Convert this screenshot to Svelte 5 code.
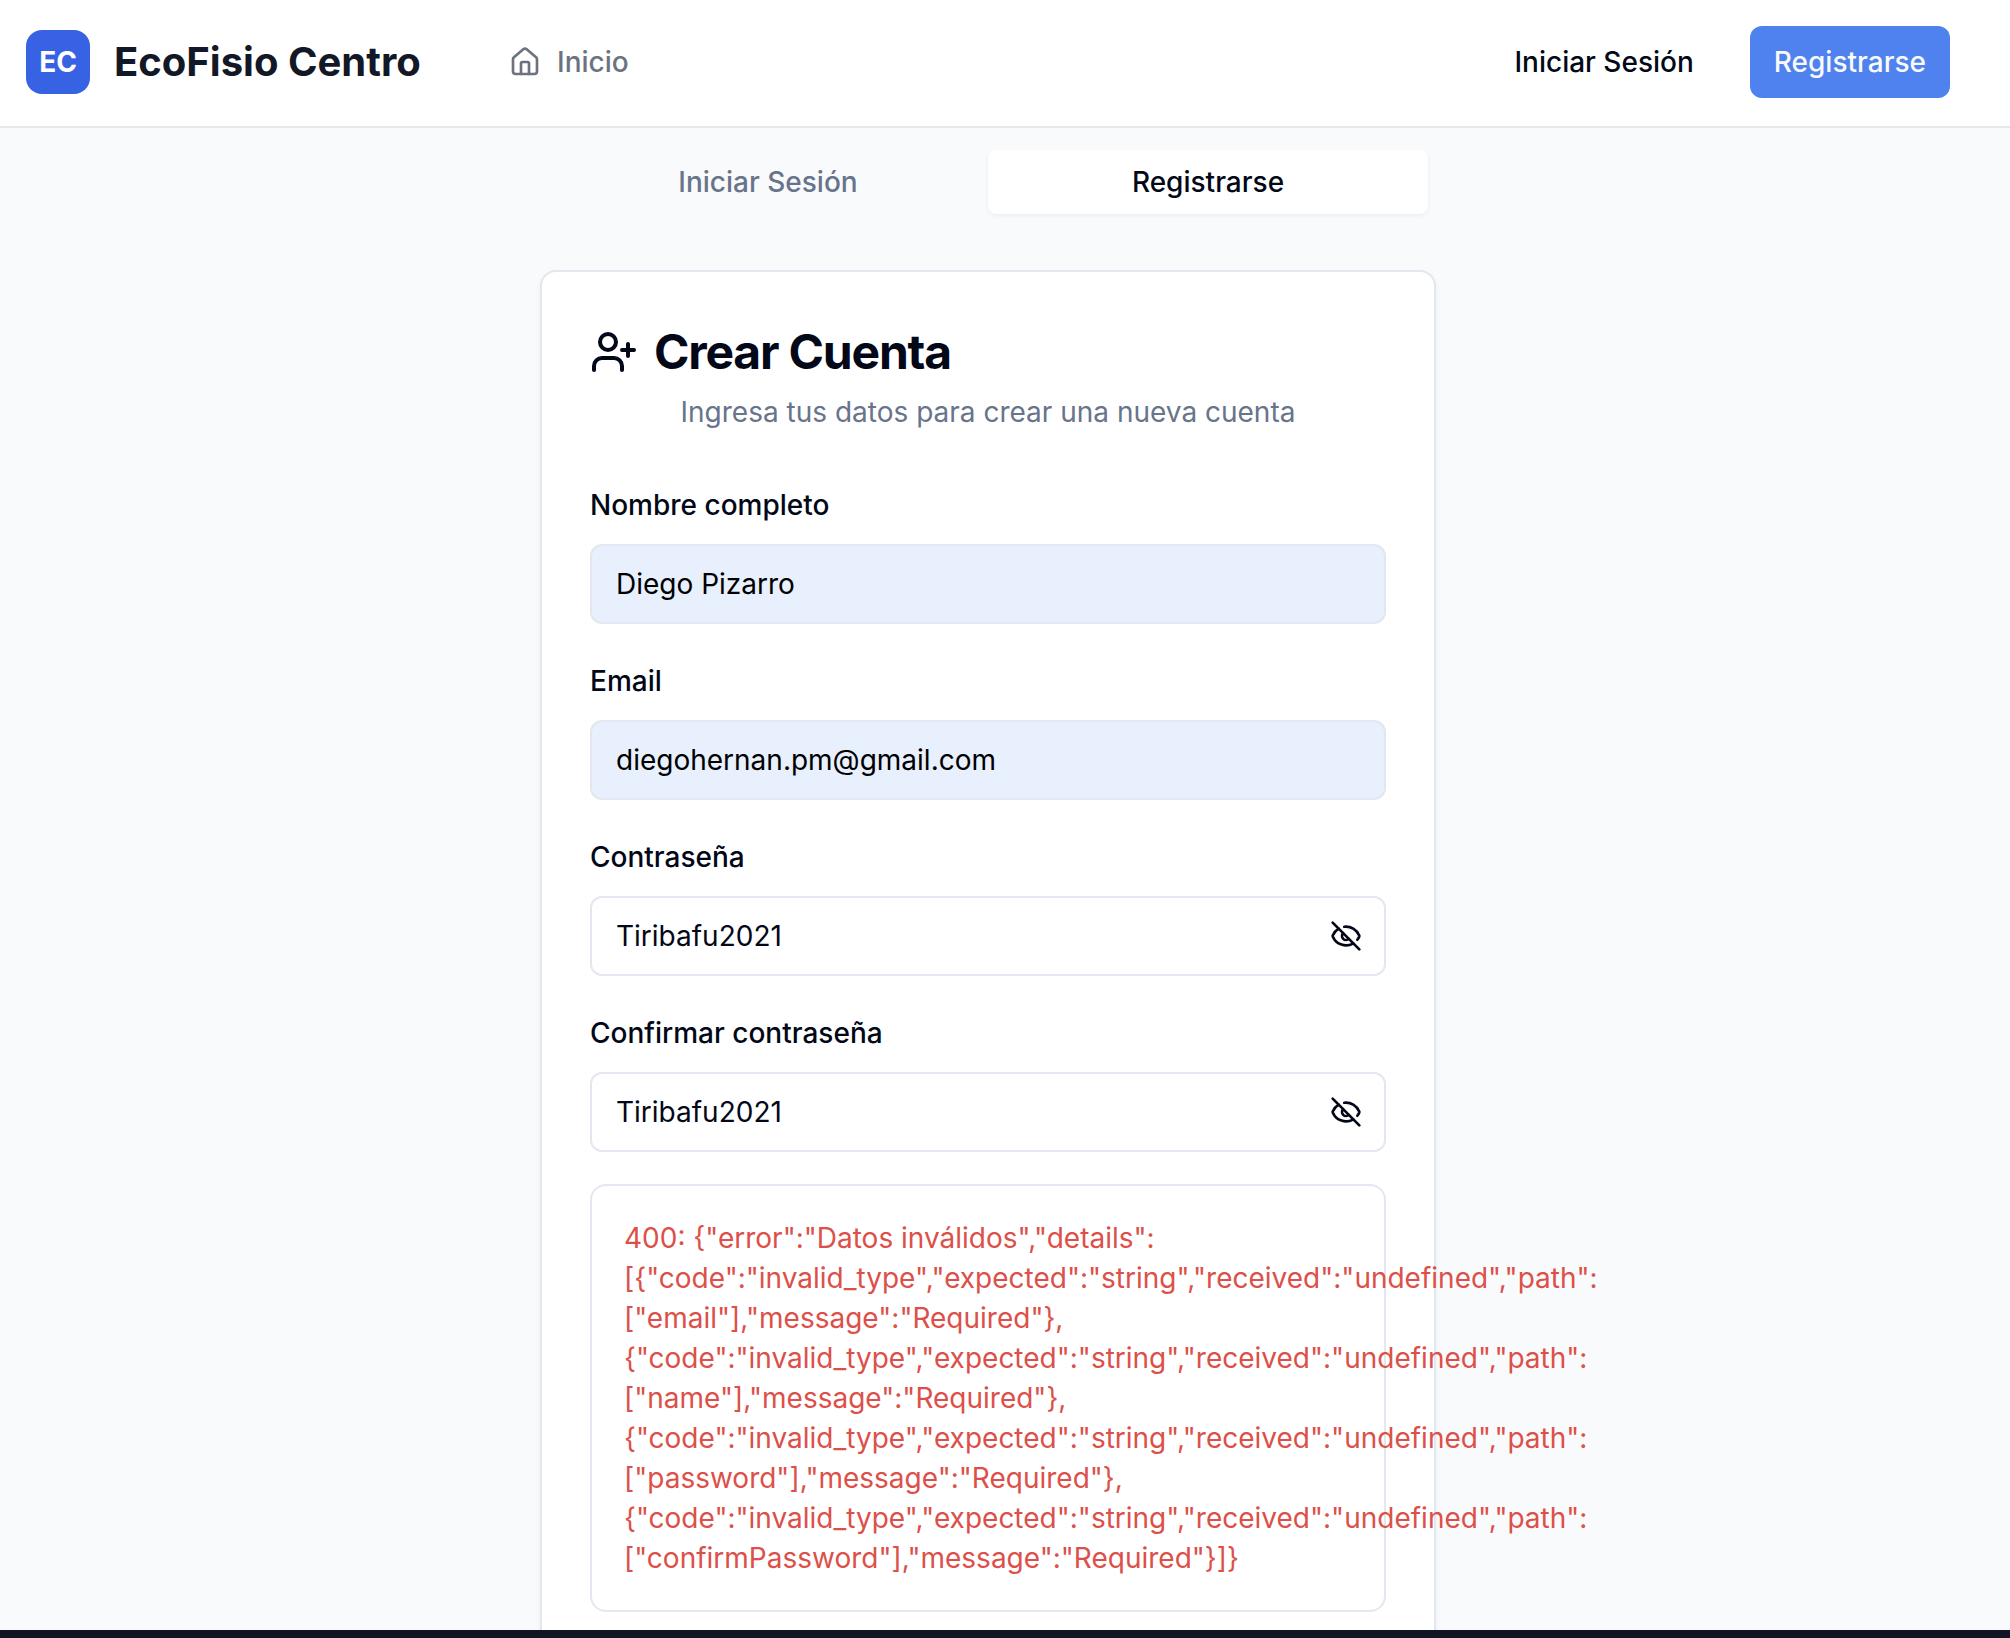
<script>
  let tab = $state('register');

  const fields = $state([
    { id: 'name', label: 'Nombre completo', value: 'Diego Pizarro', autofilled: true, secret: false },
    { id: 'email', label: 'Email', value: 'diegohernan.pm@gmail.com', autofilled: true, secret: false },
    { id: 'password', label: 'Contraseña', value: 'Tiribafu2021', autofilled: false, secret: true },
    { id: 'confirm', label: 'Confirmar contraseña', value: 'Tiribafu2021', autofilled: false, secret: true }
  ]);

  const issue = '{"code":"invalid_type","expected":"string","received":"undefined","path":';
  const errorLines = [
    '400: {"error":"Datos inválidos","details":',
    '[' + issue,
    '["email"],"message":"Required"},',
    issue,
    '["name"],"message":"Required"},',
    issue,
    '["password"],"message":"Required"},',
    issue,
    '["confirmPassword"],"message":"Required"}]}'
  ];
</script>

<div class="page">
  <header class="topbar">
    <div class="logo">EC</div>
    <div class="brand">EcoFisio Centro</div>
    <nav class="nav">
      <svg class="icon" viewBox="0 0 24 24">
        <path d="M15 21v-8a1 1 0 0 0-1-1h-4a1 1 0 0 0-1 1v8" />
        <path d="M3 10a2 2 0 0 1 .709-1.528l7-5.999a2 2 0 0 1 2.582 0l7 5.999A2 2 0 0 1 21 10v9a2 2 0 0 1-2 2H5a2 2 0 0 1-2-2z" />
      </svg>
      <span>Inicio</span>
    </nav>
    <div class="actions">
      <button class="ghost">Iniciar Sesión</button>
      <button class="primary">Registrarse</button>
    </div>
  </header>

  <main class="content">
    <div class="tabs">
      <button class="tab" class:active={tab === 'login'} onclick={() => (tab = 'login')}>Iniciar Sesión</button>
      <button class="tab" class:active={tab === 'register'} onclick={() => (tab = 'register')}>Registrarse</button>
    </div>

    <section class="card">
      <h1 class="title">
        <svg class="icon large" viewBox="0 0 24 24">
          <path d="M16 21v-2a4 4 0 0 0-4-4H6a4 4 0 0 0-4 4v2" />
          <circle cx="9" cy="7" r="4" />
          <path d="M19 8v6M22 11h-6" />
        </svg>
        <span>Crear Cuenta</span>
      </h1>
      <p class="subtitle">Ingresa tus datos para crear una nueva cuenta</p>

      <form class="form">
        {#each fields as field (field.id)}
          <div class="field">
            <label for={field.id}>{field.label}</label>
            <div class="control" class:autofilled={field.autofilled}>
              <input id={field.id} type="text" autocomplete="off" spellcheck="false" bind:value={field.value} />
              {#if field.secret}
                <svg class="icon" viewBox="0 0 24 24">
                  <path d="M10.733 5.076a10.744 10.744 0 0 1 11.205 6.575 1 1 0 0 1 0 .696 10.747 10.747 0 0 1-1.444 2.49" />
                  <path d="M14.084 14.158a3 3 0 0 1-4.242-4.242" />
                  <path d="M17.479 17.499a10.75 10.75 0 0 1-15.417-5.151 1 1 0 0 1 0-.696 10.75 10.75 0 0 1 4.446-5.143" />
                  <path d="m2 2 20 20" />
                </svg>
              {/if}
            </div>
          </div>
        {/each}

        <div class="alert" role="alert">
          {#each errorLines as line}
            <div class="line">{line}</div>
          {/each}
        </div>
      </form>
    </section>
  </main>

  <footer class="footer"></footer>
</div>

<style>
  :global(body) {
    margin: 0;
    overflow: hidden;
  }
  .page {
    box-sizing: border-box;
    height: 1638px;
    display: flex;
    flex-direction: column;
    background: #f9fafc;
    color: #020817;
    font: 400 28px/40px Inter, sans-serif;
    overflow: hidden;
  }
  .page :global(*) {
    box-sizing: border-box;
  }
  button,
  input {
    font: inherit;
    color: inherit;
    border: 0;
    background: none;
    margin: 0;
    outline: none;
  }
  .icon {
    width: 32px;
    height: 32px;
    flex: none;
    fill: none;
    stroke: currentColor;
    stroke-width: 2;
    stroke-linecap: round;
    stroke-linejoin: round;
  }
  .icon.large {
    width: 48px;
    height: 48px;
  }
  .topbar {
    height: 128px;
    flex: none;
    display: flex;
    align-items: center;
    padding: 0 60px 2px 26px;
    background: #fff;
    border-bottom: 2px solid #e5e7ec;
  }
  .logo {
    width: 64px;
    height: 64px;
    display: grid;
    place-items: center;
    border-radius: 16px;
    background: #3662e3;
    color: #fff;
    font-weight: 700;
  }
  .brand {
    margin-left: 24px;
    width: 306px;
    font-size: 40px;
    font-weight: 700;
    line-height: 56px;
    color: #131827;
    white-space: nowrap;
  }
  .nav {
    display: flex;
    align-items: center;
    gap: 16px;
    margin-left: 89px;
    font-weight: 500;
    color: #6c727f;
  }
  .actions {
    display: flex;
    gap: 32px;
    margin-left: auto;
  }
  .ghost,
  .primary {
    height: 72px;
    padding: 0 24px;
    border-radius: 12px;
    font-weight: 500;
  }
  .primary {
    background: #4f82ee;
    color: #f8fafc;
  }
  .content {
    flex: 1;
    min-height: 0;
    width: 896px;
    margin-left: 540px;
    padding-top: 14px;
    display: flex;
    flex-direction: column;
    gap: 48px;
  }
  .tabs {
    flex: none;
    display: grid;
    grid-template-columns: 1fr 1fr;
    padding: 8px;
  }
  .tab {
    height: 64px;
    border-radius: 8px;
    font-weight: 500;
    color: #67748a;
  }
  .tab.active {
    background: #fff;
    color: #020817;
    box-shadow: 0 2px 4px rgba(0, 0, 0, 0.05);
  }
  .card {
    flex: none;
    height: 1500px;
    padding: 48px;
    border: 2px solid #e2e7f0;
    border-radius: 16px;
    background: #fff;
    box-shadow: 0 2px 4px rgba(0, 0, 0, 0.05);
  }
  .title {
    display: flex;
    align-items: center;
    gap: 16px;
    margin: 0;
    font-size: 48px;
    font-weight: 700;
    line-height: 64px;
    letter-spacing: -0.025em;
  }
  .subtitle {
    margin: 8px 0 48px;
    text-align: center;
    color: #67748a;
  }
  .form {
    display: flex;
    flex-direction: column;
    gap: 32px;
  }
  label {
    display: block;
    margin-bottom: 14px;
    font-weight: 500;
    line-height: 50px;
  }
  .control {
    height: 80px;
    display: flex;
    align-items: center;
    padding: 0 22px 0 24px;
    border: 2px solid #e2e7f0;
    border-radius: 12px;
    background: #fff;
  }
  .control.autofilled {
    background: #e8effd;
    color: #000;
  }
  input {
    flex: 1;
    min-width: 0;
    padding: 0;
  }
  .alert {
    padding: 32px;
    border: 2px solid #e2e7f0;
    border-radius: 16px;
    color: #dc5049;
  }
  .line {
    white-space: nowrap;
  }
  .footer {
    position: relative;
    flex: none;
    height: 8px;
    background: #101524;
  }
</style>
